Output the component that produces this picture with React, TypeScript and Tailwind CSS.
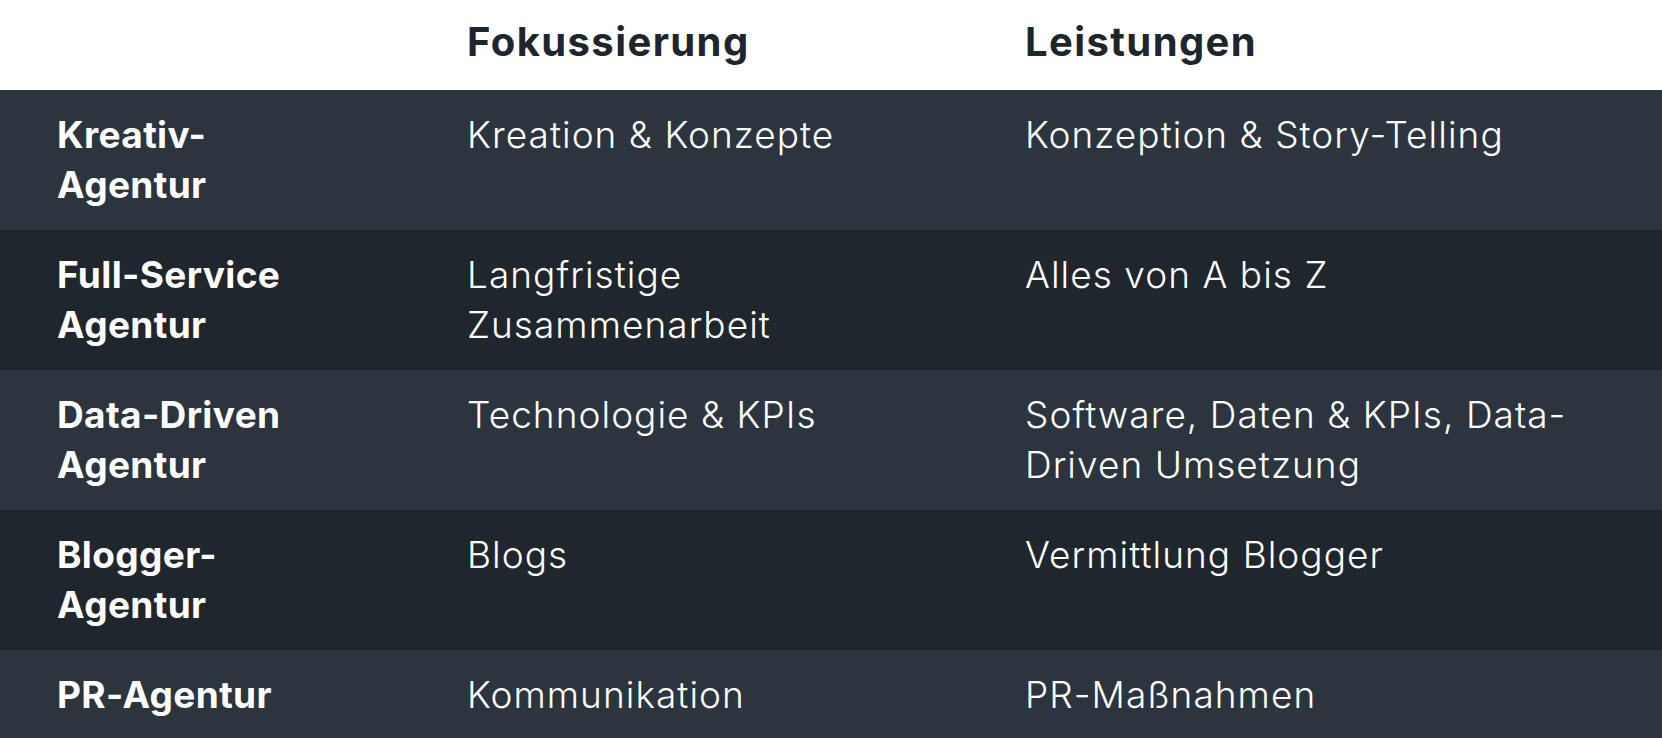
const rows = [
  {
    name: 'Kreativ-Agentur',
    focus: 'Kreation & Konzepte',
    services: 'Konzeption & Story-Telling',
  },
  {
    name: 'Full-Service Agentur',
    focus: 'Langfristige Zusammenarbeit',
    services: 'Alles von A bis Z',
  },
  {
    name: 'Data-Driven Agentur',
    focus: 'Technologie & KPIs',
    services: 'Software, Daten & KPIs, Data-Driven Umsetzung',
  },
  {
    name: 'Blogger-Agentur',
    focus: 'Blogs',
    services: 'Vermittlung Blogger',
  },
  {
    name: 'PR-Agentur',
    focus: 'Kommunikation',
    services: 'PR-Maßnahmen',
  },
]

export default function App() {
  return (
    <div className="w-[1662px] h-[738px] overflow-hidden bg-white font-['Inter','Liberation_Sans',sans-serif]">
      {/* header */}
      <div className="grid grid-cols-[410px_558px_1fr] h-[90px] items-center pl-[57px] pb-[6px] bg-white text-[#1e262d] text-[40px] font-bold tracking-[0.035em]">
        <div />
        <div>Fokussierung</div>
        <div>Leistungen</div>
      </div>

      {rows.map((row, idx) => (
        <div
          key={row.name}
          className={
            'grid grid-cols-[410px_558px_1fr] pl-[57px] py-5 text-white text-[37px] leading-[50px] ' +
            (idx % 2 === 0 ? 'bg-[#2c353e]' : 'bg-[#1f262c]')
          }
        >
          <div className="pr-[140px] font-bold tracking-[0.01em]">{row.name}</div>
          <div className="pr-[110px] font-light tracking-[0.028em]">{row.focus}</div>
          <div className="pr-[50px] font-light tracking-[0.028em]">{row.services}</div>
        </div>
      ))}
    </div>
  )
}
